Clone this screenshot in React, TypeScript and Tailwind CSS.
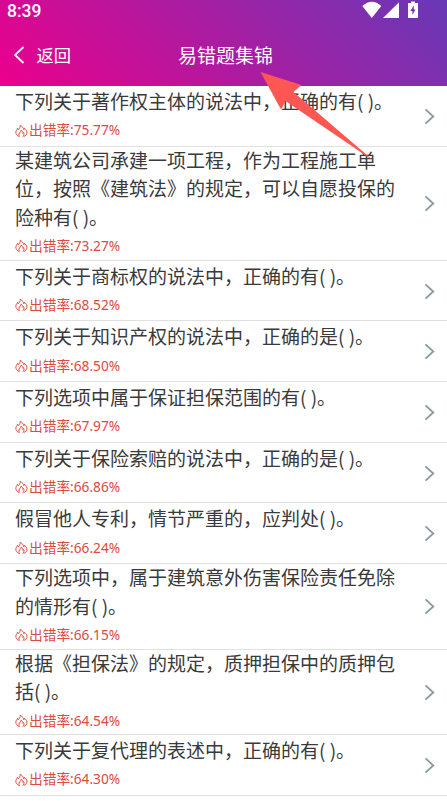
type Question = {
  title: string
  rate: string
}

const questions: Question[] = [
  { title: '下列关于著作权主体的说法中，正确的有( )。', rate: '75.77%' },
  { title: '某建筑公司承建一项工程，作为工程施工单位，按照《建筑法》的规定，可以自愿投保的险种有( )。', rate: '73.27%' },
  { title: '下列关于商标权的说法中，正确的有( )。', rate: '68.52%' },
  { title: '下列关于知识产权的说法中，正确的是( )。', rate: '68.50%' },
  { title: '下列选项中属于保证担保范围的有( )。', rate: '67.97%' },
  { title: '下列关于保险索赔的说法中，正确的是( )。', rate: '66.86%' },
  { title: '假冒他人专利，情节严重的，应判处( )。', rate: '66.24%' },
  { title: '下列选项中，属于建筑意外伤害保险责任免除的情形有( )。', rate: '66.15%' },
  { title: '根据《担保法》的规定，质押担保中的质押包括( )。', rate: '64.54%' },
  { title: '下列关于复代理的表述中，正确的有( )。', rate: '64.30%' },
]

const StatusIcons = () => (
  <svg width="58" height="19" viewBox="0 0 58 19" fill="#fff">
    <path d="M0.3 6Q9.8 -2.5 19.3 6L9.8 18Z" />
    <path d="M37 2.300V18H21Z" />
    <path fillRule="evenodd" d="M49 1.500H53V3H56V18H46V3H49ZM51.800 5.500L48.300 11H50.400V15L53.500 9.500H51.800Z" />
  </svg>
)

const FlameIcon = () => (
  <svg className="shrink-0" width="13" height="14" viewBox="0 0 13 14" fill="none" stroke="currentColor" strokeWidth="1" strokeLinecap="round" strokeLinejoin="round">
    <path d="M3.400 12.300C0.900 10.800 0.300 8.600 1.300 6.500C1.700 5.700 2.300 5 2.600 4.200C3.100 4.700 3.300 5.200 3.300 5.700C4.800 4.600 5.300 2.900 5.100 1.400C7.500 2.500 8.600 4.200 8.800 5.800C9.200 5.400 9.400 4.900 9.400 4.300C11.300 5.700 12.400 7.500 11.900 9.300C11.500 10.800 10.500 11.800 9.100 12.300" />
    <path d="M4.400 12.300C3.300 10.600 4 9.200 5.200 8.100C5.900 7.400 6.200 6.800 6.100 6C7.700 7.200 8 8.300 7.800 9.400L8.700 8.600C9.400 10 8.900 11.400 8 12.300" />
  </svg>
)

const QuestionRow = ({ title, rate }: Question) => (
  <div className="flex min-h-[60.7px] items-center border-b border-[#e1e1e1]">
    <div className="-mb-px ml-[15px] w-[381px]">
      <p className="-mt-px mb-px text-[19px] leading-[28.5px] text-[#3a3a3a]">{title}</p>
      <div className="flex h-[28.5px] items-center text-[13.7px] text-[#dc4a40]">
        <FlameIcon />
        <span className="ml-px font-['Noto_Sans','Noto_Sans_CJK_SC',sans-serif]">出错率:{rate}</span>
      </div>
    </div>
    <svg className="mt-px ml-7 shrink-0" width="11" height="17" viewBox="0 0 11 17" fill="none" stroke="#8799a3" strokeWidth="1.8">
      <path d="M1.500 1.300L9.300 8.500L1.500 15.700" />
    </svg>
  </div>
)

export default function App() {
  return (
    <main className="relative flow-root h-[801px] w-[447px] overflow-hidden bg-white font-['Noto_Sans_CJK_SC',sans-serif]">
      <header className="h-[86px] bg-[linear-gradient(45deg,#ec008c,#6739b6)] text-white">
        <div className="flex h-6 justify-between pr-[27px] pl-[7px]">
          <span className="font-[Roboto,sans-serif] text-[17.5px] leading-[22px] font-medium">8:39</span>
          <StatusIcons />
        </div>
        <div className="grid h-[62px] grid-cols-3 items-center">
          <div className="flex items-center pl-[13px] text-[17.3px]">
            <svg width="12" height="18" viewBox="0 0 12 18" fill="none" stroke="#fff" strokeWidth="1.8">
              <path d="M10.500 1L2 9L10.500 17" />
            </svg>
            <span className="ml-[11.5px]">返回</span>
          </div>
          <h1 className="pl-[4px] text-center text-[19px] whitespace-nowrap">易错题集锦</h1>
        </div>
      </header>
      <section>
        {questions.map((item) => (
          <QuestionRow key={item.title} title={item.title} rate={item.rate} />
        ))}
      </section>
      <svg className="absolute top-[70px] left-[258px]" width="120" height="95" viewBox="0 0 120 95" fill="#fc5753">
        <path d="M2.500 2L43.500 15L35.500 22L116.500 91.500L27.500 31L23 39.500Z" />
      </svg>
    </main>
  )
}
